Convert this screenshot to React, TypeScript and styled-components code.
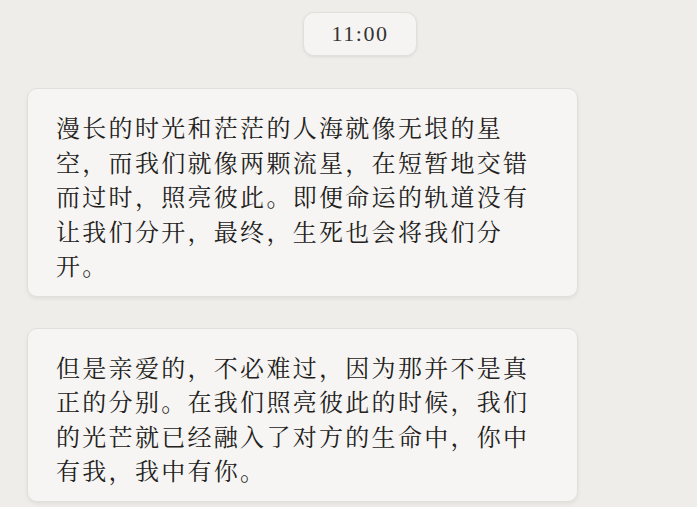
import styled, { createGlobalStyle } from 'styled-components';

const messages = [
  '漫长的时光和茫茫的人海就像无垠的星空，而我们就像两颗流星，在短暂地交错而过时，照亮彼此。即便命运的轨道没有让我们分开，最终，生死也会将我们分开。',
  '但是亲爱的，不必难过，因为那并不是真正的分别。在我们照亮彼此的时候，我们的光芒就已经融入了对方的生命中，你中有我，我中有你。',
];

const App = () => {
  return (
    <>
      <GlobalStyle />
      <Page>
        <TimeRow>
          <TimePill>11:00</TimePill>
        </TimeRow>
        <Thread>
          {messages.map((text, i) => (
            <Bubble key={i}>{text}</Bubble>
          ))}
        </Thread>
      </Page>
    </>
  );
};

const GlobalStyle = createGlobalStyle`
  html, body {
    margin: 0;
    padding: 0;
    background: #efedea;
  }
  body {
    font-family: "Noto Serif CJK SC", "Liberation Serif", "Noto Sans CJK SC", serif;
  }
`;

const Page = styled.div`
  width: 697px;
  height: 507px;
  overflow: hidden;
  box-sizing: border-box;
  padding: 12px 119px 0 27px;
  background: #efedea;
`;

const TimeRow = styled.div`
  display: flex;
  justify-content: center;
  padding-left: 115px;
`;

const TimePill = styled.div`
  width: 114px;
  height: 44px;
  box-sizing: border-box;
  display: flex;
  align-items: center;
  justify-content: center;
  background: #f6f4f2;
  border: 1px solid #e3e0dc;
  border-radius: 11px;
  box-shadow: 0 1px 3px rgba(0, 0, 0, 0.08);
  font-family: "Liberation Serif", serif;
  font-size: 22px;
  letter-spacing: 1.5px;
  color: #333;
`;

const Thread = styled.div`
  display: flex;
  flex-direction: column;
  gap: 31px;
  margin-top: 32px;
`;

const Bubble = styled.div`
  box-sizing: border-box;
  width: 551px;
  padding: 21px 44px 13px 28px;
  background: #f6f5f3;
  border: 1px solid #e2dfdb;
  border-radius: 10px;
  box-shadow: 0 2px 4px rgba(0, 0, 0, 0.06);
  font-family: "Noto Serif CJK SC", "Noto Sans CJK SC", serif;
  font-size: 24px;
  letter-spacing: 2.3px;
  line-height: 34.5px;
  color: #222120;
`;

export default App;
